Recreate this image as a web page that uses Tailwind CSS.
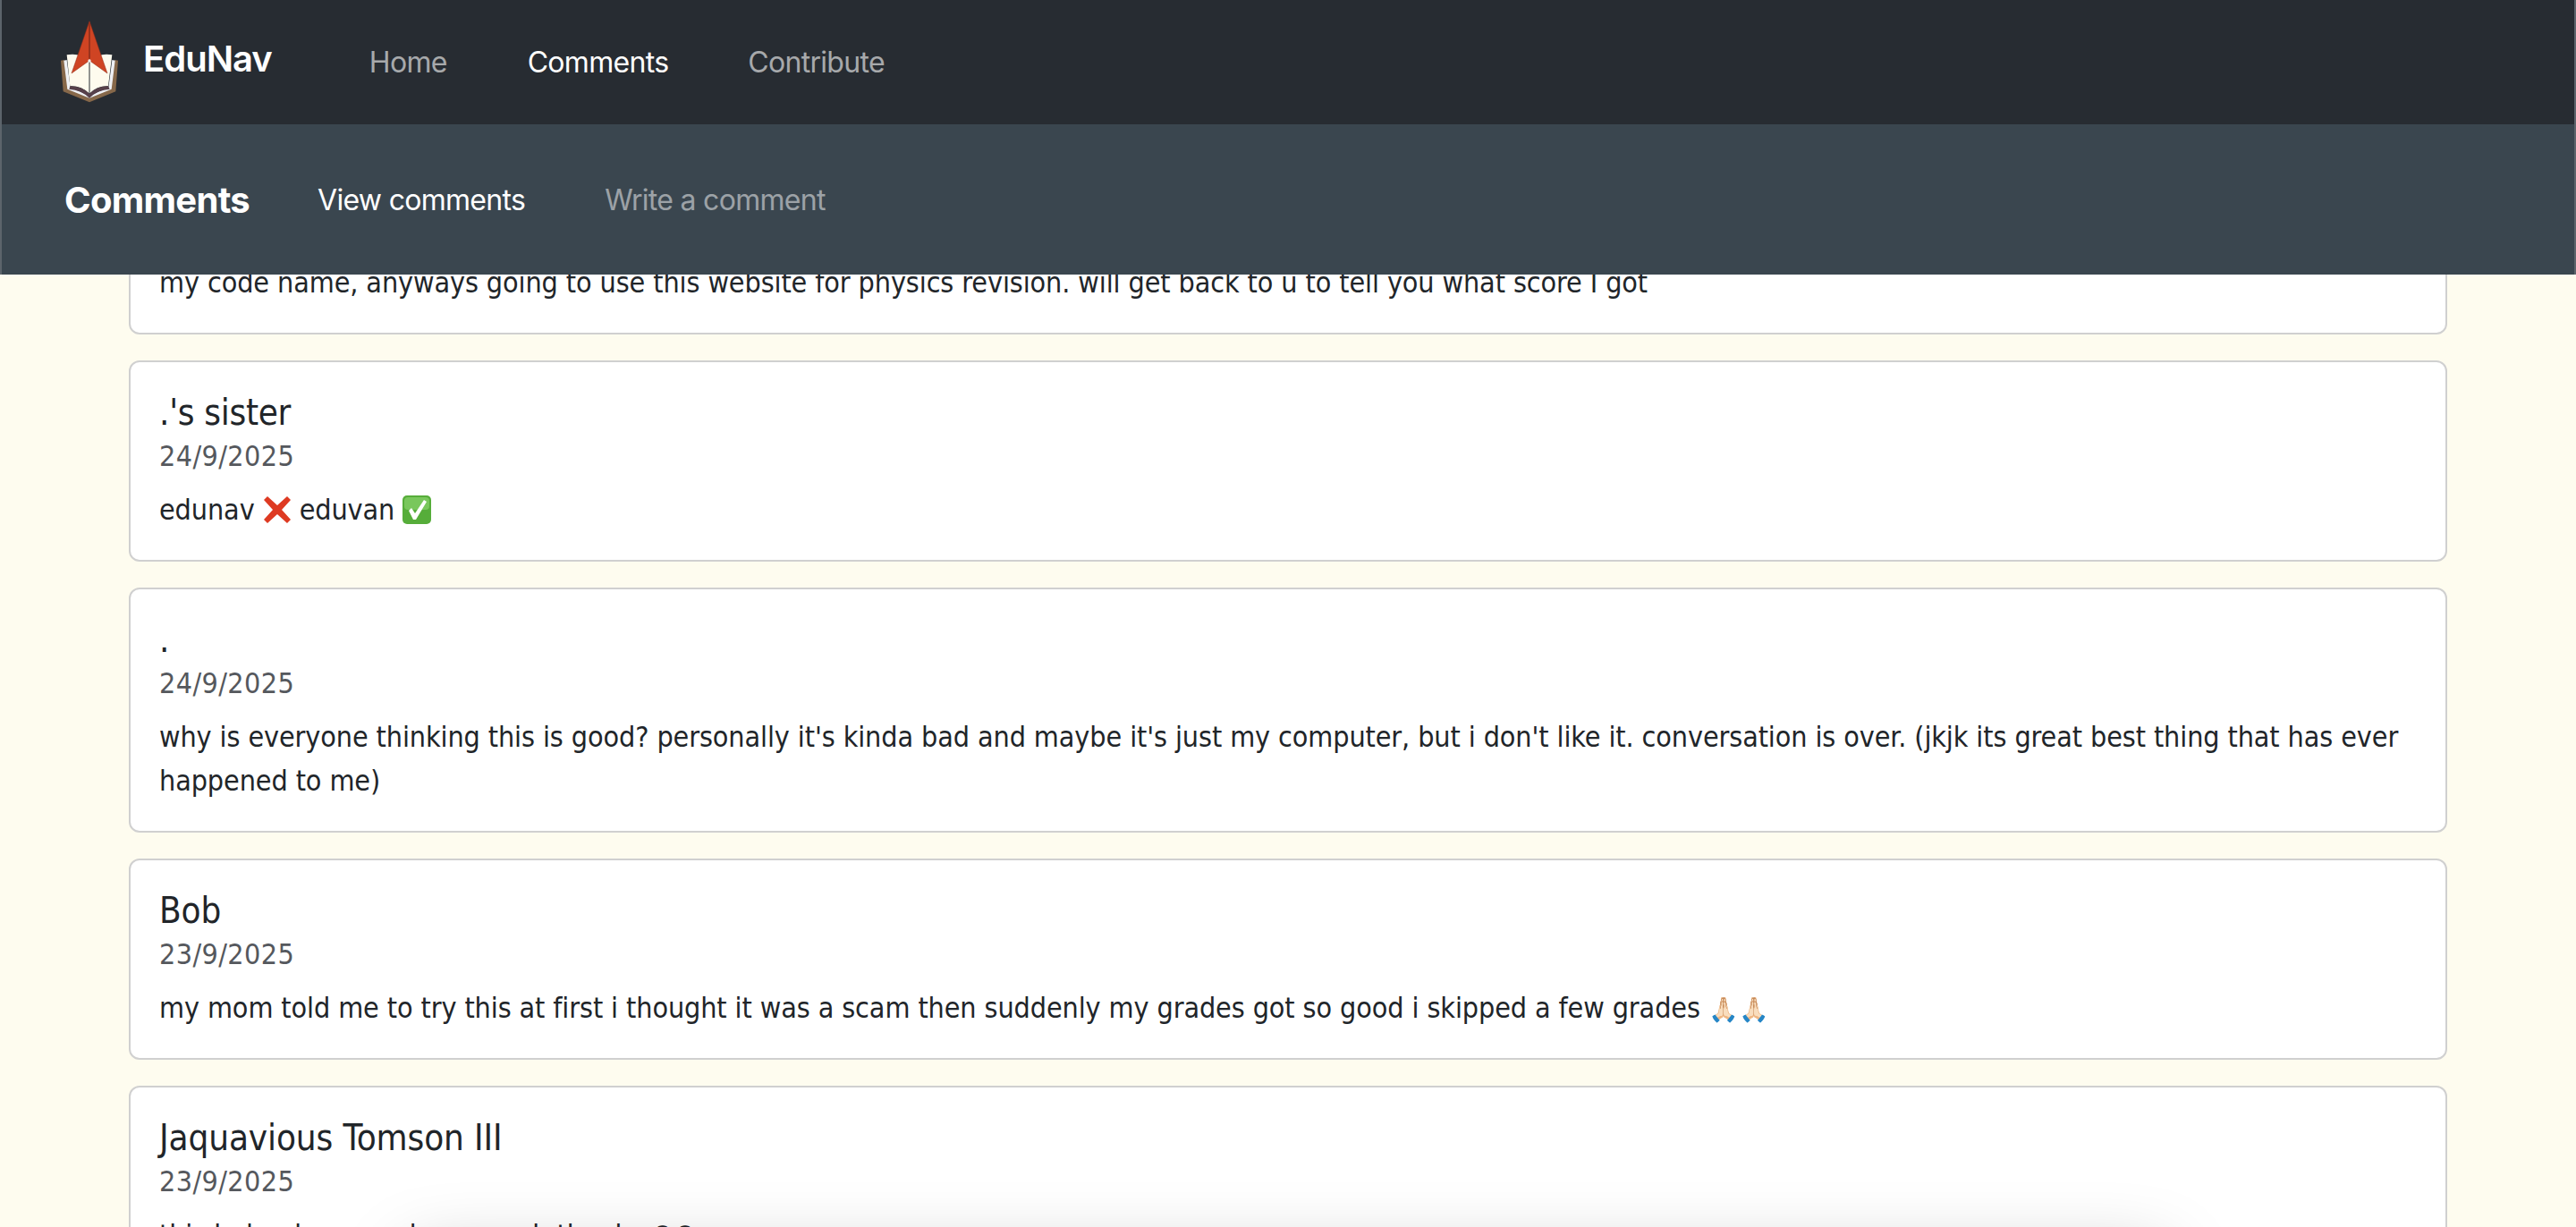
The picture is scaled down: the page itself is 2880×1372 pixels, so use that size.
<!DOCTYPE html>
<html lang="en">
<head>
  <meta charset="UTF-8">
  <title>EduNav Comments</title>
  <script src="https://cdn.jsdelivr.net/npm/@tailwindcss/browser@4"></script>
</head>
<body class="bg-[#fefcef] font-['DejaVu_Sans',sans-serif] font-stretch-condensed text-[#212529] overflow-hidden">
  <div class="h-screen flex flex-col relative overflow-hidden">
    <header class="relative z-10 shrink-0 font-['Inter',sans-serif] font-stretch-normal border-x-2 border-x-[#5c646b]">
      <nav class="h-[139px] bg-[#272c32] flex items-center pl-[64px] tracking-[-0.7px]">
        <!-- logo traced at 3x, then cropped with the viewBox -->
        <svg class="w-[68px] h-[94px] mt-[-2px]" viewBox="76 35 204 282">
          <path d="M82 172 L94 170 L110 265 L178 298 L246 265 L262 170 L274 172 L266 276 L178 312 L90 276 Z" fill="#86684a"/>
          <path d="M92 172 L102 170 L114 262 L178 290 L242 262 L254 170 L264 172 L252 268 L178 298 L104 268 Z" fill="#eef0f4"/>
          <path d="M102 153 Q145 145 178 172 Q212 145 254 153 L241 258 Q205 256 178 283 Q150 256 113 258 Z" fill="#fefbee"/>
          <path d="M113 258 Q150 258 178 283 Q205 258 241 258 L246 268 Q205 270 178 298 Q150 270 110 268 Z" fill="#57404a"/>
          <path d="M178 175 L178 283" stroke="#272c32" stroke-width="3"/>
          <path d="M178 40 L238 215 L178 172 L118 215 Z" fill="#cf4423" stroke="#8f2f1c" stroke-width="1.5"/>
          <path d="M178 46 L178 166" stroke="#8f2f1c" stroke-width="5"/>
          <circle cx="178" cy="173" r="5" fill="#f3f4f6"/>
        </svg>
        <span class="ml-[26px] -mt-[8px] text-[40px] font-semibold text-white leading-none tracking-[-1px]">EduNav</span>
        <a class="ml-[109px] text-[32px] text-white/60">Home</a>
        <a class="ml-[90px] text-[32px] text-white">Comments</a>
        <a class="ml-[89px] text-[32px] text-white/60">Contribute</a>
      </nav>
      <div class="h-[168px] bg-[#3a464f] flex items-center pl-[70px] pt-[2px] tracking-[-0.7px]">
        <span class="text-[40px] font-bold text-white">Comments</span>
        <a class="ml-[76px] text-[32px] text-white">View comments</a>
        <a class="ml-[89px] text-[32px] text-white/50">Write a comment</a>
      </div>
    </header>

    <main class="flex-1 overflow-hidden px-[144px] flex flex-col gap-[29px] -mt-[57px] tracking-[-0.1px]">
      <article class="shrink-0 bg-white border-2 border-[#d0d0d0] rounded-[12px] px-[32px] pb-[32px] pt-[40px]">
        <p class="text-[32px] leading-[48px]">my code name, anyways going to use this website for physics revision. will get back to u to tell you what score I got</p>
      </article>
      <article class="shrink-0 bg-white border-2 border-[#d0d0d0] rounded-[12px] p-[32px]">
        <h2 class="text-[40px] leading-[49px] tracking-[-0.3px]">.'s sister</h2>
        <p class="text-[32px] leading-[48px] text-[#55585d] tracking-[0.4px]">24/9/2025</p>
        <p class="text-[32px] leading-[48px] mt-[12px]">edunav
          <svg class="inline-block w-[32px] h-[32px] align-[-5px]" viewBox="0 0 32 32"><path d="M5 1 L16 11 L27 1 L31 5 L21 16 L31 27 L27 31 L16 21 L5 31 L1 27 L11 16 L1 5 Z" fill="#de3a22"/></svg>
          eduvan
          <svg class="inline-block w-[32px] h-[32px] align-[-5px]" viewBox="0 0 32 32"><rect width="32" height="32" rx="5" fill="#56ad3a"/><rect x="2" y="2" width="28" height="14" rx="4" fill="#79c75c"/><path d="M7 17 L10 14 L14 20 L24 5 L27 7 L15 27 L12 27 Z" fill="#fff"/></svg>
        </p>
      </article>
      <article class="shrink-0 bg-white border-2 border-[#d0d0d0] rounded-[12px] p-[32px]">
        <h2 class="text-[40px] leading-[49px]">.</h2>
        <p class="text-[32px] leading-[48px] text-[#55585d] tracking-[0.4px]">24/9/2025</p>
        <p class="text-[32px] leading-[48.5px] mt-[12px]">why is everyone thinking this is good? personally it's kinda bad and maybe it's just my computer, but i don't like it. conversation is over. (jkjk its great best thing that has ever happened to me)</p>
      </article>
      <article class="shrink-0 bg-white border-2 border-[#d0d0d0] rounded-[12px] p-[32px]">
        <h2 class="text-[40px] leading-[49px]">Bob</h2>
        <p class="text-[32px] leading-[48px] text-[#55585d] tracking-[0.4px]">23/9/2025</p>
        <p class="text-[32px] leading-[48px] mt-[12px] h-[48px]">my mom told me to try this at first i thought it was a scam then suddenly my grades got so good i skipped a few grades <span class="text-[27px] leading-none">🙏🏻🙏🏻</span></p>
      </article>
      <article class="shrink-0 bg-white border-2 border-[#d0d0d0] rounded-[12px] p-[32px]">
        <h2 class="text-[40px] leading-[49px]">Jaquavious Tomson III</h2>
        <p class="text-[32px] leading-[48px] text-[#55585d] tracking-[0.4px]">23/9/2025</p>
        <p class="text-[32px] leading-[48px] mt-[12px] h-[48px]">this helped my grade so much thanks <span class="text-[27px] leading-none">😊😊</span></p>
      </article>
    </main>

    <!-- floating bar sits just under the fold, only its shadow shows -->
    <div class="absolute left-[460px] right-[460px] top-[1405px] h-[80px] bg-white shadow-[0_0_80px_rgba(0,0,0,0.25)]"></div>
  </div>
</body>
</html>
